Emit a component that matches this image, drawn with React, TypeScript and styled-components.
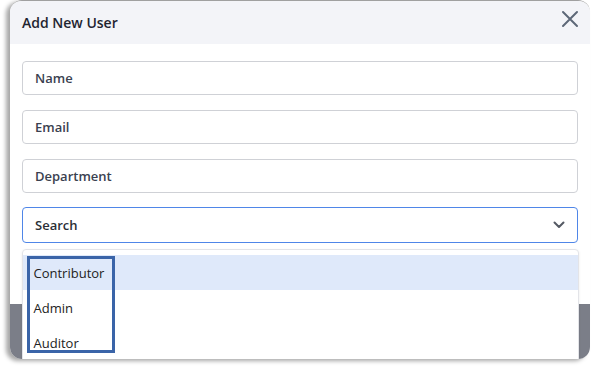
import React from "react";
import styled, { createGlobalStyle } from "styled-components";

const GlobalStyle = createGlobalStyle`
  html, body {
    margin: 0;
    padding: 0;
    background: #ffffff;
    font-family: "Open Sans", "Noto Sans", sans-serif;
  }
`;

const Page = styled.div`
  width: 592px;
  height: 368px;
  padding: 0 2px 0 10px;
  box-sizing: border-box;
`;

const Modal = styled.div`
  width: 580px;
  height: 359px;
  display: flex;
  flex-direction: column;
  border-radius: 12px;
  border-top: 1px solid #a0a0a0;
  overflow: hidden;
  box-shadow: -4px 2px 4px rgba(0, 0, 0, 0.35);
  box-sizing: border-box;
  position: relative;
`;

const Header = styled.div`
  height: 43px;
  flex-shrink: 0;
  display: flex;
  align-items: center;
  justify-content: space-between;
  padding: 0 12px;
  background: #f3f4f8;
`;

const Title = styled.h2`
  margin: 0;
  font-size: 14px;
  font-weight: 600;
  color: #1f2430;
`;

const Close = styled.button`
  border: none;
  background: none;
  padding: 0;
  width: 20px;
  height: 20px;
  margin-right: -2px;
  margin-top: -7px;
  display: flex;
  align-items: center;
  justify-content: center;
  cursor: pointer;
`;

const Body = styled.div`
  flex: 1;
  background: #ffffff;
  padding: 17px 12px 0;
  display: flex;
  flex-direction: column;
  gap: 15px;
`;

const Footer = styled.div`
  height: 55px;
  flex-shrink: 0;
  background: #7b7e88;
`;

const Field = styled.div<{ $focused?: boolean }>`
  position: relative;
  height: ${(p) => (p.$focused ? "36px" : "34px")};
  margin-top: ${(p) => (p.$focused ? "-1px" : "0")};
  box-sizing: border-box;
  border: ${(p) => (p.$focused ? "1.5px solid #4f86e8" : "1px solid #cfd1d6")};
  border-radius: 4px;
  display: flex;
  align-items: center;
  justify-content: space-between;
  padding: 0 12px;
  font-size: 13px;
  font-weight: 600;
  color: ${(p) => (p.$focused ? "#2b2f36" : "#3a4150")};
`;

const Menu = styled.div`
  position: absolute;
  top: calc(100% + 7px);
  left: -1.5px;
  right: -1.5px;
  height: 130px;
  padding-top: 5px;
  background: #ffffff;
  border: 1px solid #e3e4e8;
  border-radius: 4px;
  box-shadow: 0 1px 3px rgba(0, 0, 0, 0.08);
  z-index: 2;
`;

const Option = styled.div<{ $active?: boolean }>`
  height: 35px;
  display: flex;
  align-items: center;
  padding: 0 11px;
  font-size: 13px;
  font-weight: 400;
  color: #222;
  background: ${(p) => (p.$active ? "#dfe9fa" : "transparent")};
`;

const Highlight = styled.div`
  position: absolute;
  top: 6px;
  left: 4px;
  width: 88px;
  height: 97px;
  box-sizing: border-box;
  border: 3px solid #3a64a8;
  pointer-events: none;
`;

const options = ["Contributor", "Admin", "Auditor"];

export default function App() {
  return (
    <Page>
      <GlobalStyle />
      <Modal>
        <Header>
          <Title>Add New User</Title>
          <Close aria-label="Close">
            <svg width="18" height="18" viewBox="0 0 18 18">
              <path
                d="M2 2 L16 16 M16 2 L2 16"
                stroke="#5d6878"
                strokeWidth="2"
                strokeLinecap="round"
              />
            </svg>
          </Close>
        </Header>
        <Body>
          <Field>Name</Field>
          <Field>Email</Field>
          <Field>Department</Field>
          <Field $focused>
            Search
            <svg width="12" height="8" viewBox="0 0 12 8">
              <path
                d="M1.5 1.5 L6 6 L10.5 1.5"
                fill="none"
                stroke="#555a64"
                strokeWidth="2"
                strokeLinecap="round"
                strokeLinejoin="round"
              />
            </svg>
            <Menu>
              {options.map((o, i) => (
                <Option key={o} $active={i === 0}>
                  {o}
                </Option>
              ))}
              <Highlight />
            </Menu>
          </Field>
        </Body>
        <Footer />
      </Modal>
    </Page>
  );
}
